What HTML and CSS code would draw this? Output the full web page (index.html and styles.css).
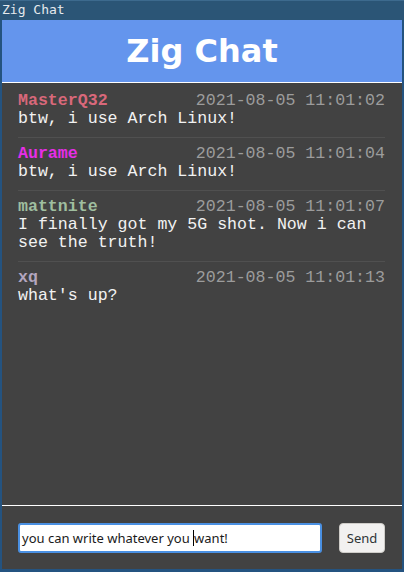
FILE: index.html
```html
<!DOCTYPE html>
<html lang="en">
<head>
<meta charset="utf-8">
<title>Zig Chat</title>
<link rel="stylesheet" href="styles.css">
</head>
<body>
<div class="titlebar">Zig Chat</div>
<div class="frame">
  <header class="header">Zig Chat</header>
  <main class="messages">
    <div class="msg">
      <div class="meta"><span class="nick nick-red">MasterQ32</span><span class="time">2021-08-05 11:01:02</span></div>
      <div class="text">btw, i use Arch Linux!</div>
    </div>
    <div class="msg">
      <div class="meta"><span class="nick nick-magenta">Aurame</span><span class="time">2021-08-05 11:01:04</span></div>
      <div class="text">btw, i use Arch Linux!</div>
    </div>
    <div class="msg">
      <div class="meta"><span class="nick nick-green">mattnite</span><span class="time">2021-08-05 11:01:07</span></div>
      <div class="text">I finally got my 5G shot. Now i can see the truth!</div>
    </div>
    <div class="msg msg-last">
      <div class="meta"><span class="nick nick-lavender">xq</span><span class="time">2021-08-05 11:01:13</span></div>
      <div class="text">what's up?</div>
    </div>
  </main>
  <footer class="composer">
    <div class="field" role="textbox">you can write whatever you <span class="caret"></span>want!</div>
    <button class="send" type="button">Send</button>
  </footer>
</div>
</body>
</html>
```

FILE: styles.css
```css
html, body {
  margin: 0;
  padding: 0;
  height: 100%;
}
body {
  background: #245380;
  display: flex;
  flex-direction: column;
  height: 572px;
  overflow: hidden;
}
.titlebar {
  height: 20px;
  box-sizing: border-box;
  background: #2b5576;
  border-top: 1px solid #3d6a8e;
  color: #e6eaee;
  font-family: "DejaVu Sans Mono", monospace;
  font-size: 13px;
  line-height: 18px;
  padding-left: 2px;
  flex: none;
}
.frame {
  flex: 1;
  margin: 0 2px 3px 2px;
  background: #424242;
  display: flex;
  flex-direction: column;
  min-height: 0;
}
.header {
  height: 62px;
  background: #6495ed;
  border-bottom: 1px solid #ffffff;
  color: #ffffff;
  font-family: "DejaVu Sans", sans-serif;
  font-weight: bold;
  font-size: 32px;
  display: flex;
  align-items: center;
  justify-content: center;
  flex: none;
}
.messages {
  flex: 1;
  padding: 2px 17px 0 16px;
  font-family: "Liberation Mono", monospace;
  font-size: 16.6px;
  line-height: 18px;
}
.msg {
  padding: 7px 0 9px;
  border-bottom: 1px solid #505050;
}
.msg-last {
  border-bottom: none;
}
.meta {
  display: flex;
  justify-content: space-between;
}
.nick {
  font-weight: bold;
}
.nick-red { color: #d9687a; }
.nick-magenta { color: #e62ee6; }
.nick-green { color: #9fbe9f; }
.nick-lavender { color: #b3a6bf; }
.time {
  color: #9c9c9c;
}
.text {
  color: #f2f2f2;
}
.composer {
  border-top: 1px solid #ffffff;
  padding: 17px 17px 16px 16px;
  display: flex;
  align-items: center;
  gap: 17px;
  flex: none;
}
.field {
  flex: 1;
  min-width: 0;
  height: 30px;
  box-sizing: border-box;
  background: #ffffff;
  border: 2px solid #4a90e2;
  border-radius: 3px;
  padding: 0 2px;
  font-family: "Noto Sans", sans-serif;
  font-size: 13px;
  line-height: 26px;
  color: #1a1a1a;
  white-space: nowrap;
  overflow: hidden;
}
.caret {
  display: inline-block;
  width: 1px;
  height: 16px;
  background: #000;
  vertical-align: -3px;
}
.send {
  flex: none;
  width: 46px;
  height: 30px;
  box-sizing: border-box;
  background: #f2f1f0;
  border: 1px solid #cfcdc9;
  border-radius: 4px;
  font-family: "Noto Sans", sans-serif;
  font-size: 13px;
  color: #2e3436;
  padding: 0;
}
```
